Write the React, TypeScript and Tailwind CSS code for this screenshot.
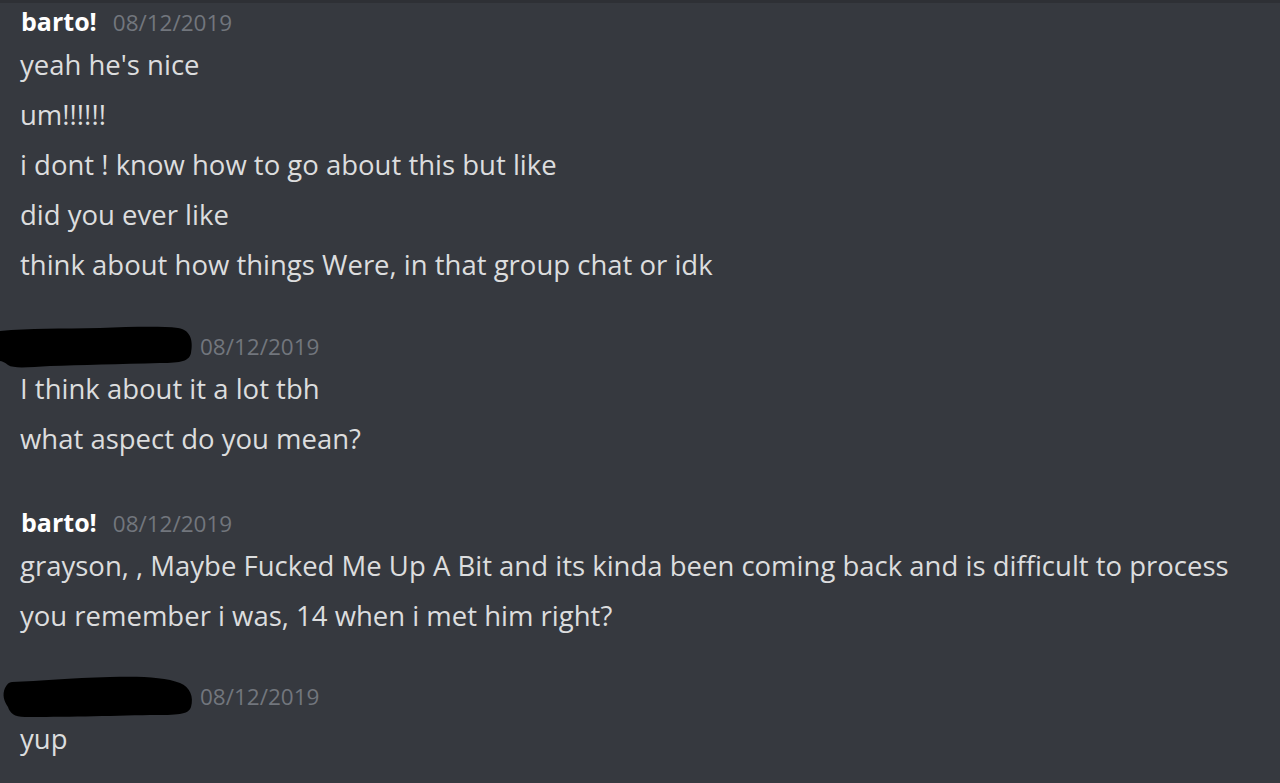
const Redacted = () => (
  <svg width="196" height="44" viewBox="0 0 196 44" className="block">
    <path
      d="M0 6 C30 3 60 4 100 3 C130 2 160 1 178 3 C192 5 193 18 191 28 C189 36 182 38 160 38 C120 39 80 40 50 41 C30 42 14 44 8 40 C4 37 2 36 0 36 Z"
      fill="#000"
    />
  </svg>
);

const Redacted2 = () => (
  <svg width="196" height="44" viewBox="0 0 196 44" className="block">
    <path
      d="M12 7 C40 6 70 3 110 2 C140 1 165 2 180 8 C190 12 194 22 191 32 C188 40 178 40 150 40 C110 41 60 42 25 42 C14 42 10 38 8 32 C4 26 2 20 5 13 C7 9 9 7 12 7 Z"
      fill="#000"
    />
  </svg>
);

type Msg = {
  name?: string;
  redact?: 1 | 2;
  gap: string;
  lines: string[];
};

const groups: Msg[] = [
  {
    name: "barto!",
    gap: "",
    lines: [
      "yeah he's nice",
      "um!!!!!!",
      "i dont ! know how to go about this but like",
      "did you ever like",
      "think about how things Were, in that group chat or idk",
    ],
  },
  { redact: 1, gap: "mt-[40px]", lines: ["I think about it a lot tbh", "what aspect do you mean?"] },
  {
    name: "barto!",
    gap: "mt-[40px]",
    lines: [
      "grayson, , Maybe Fucked Me Up A Bit and its kinda been coming back and is difficult to process",
      "you remember i was, 14 when i met him right?",
    ],
  },
  { redact: 2, gap: "mt-[39px]", lines: ["yup"] },
];

const Group = ({ msg }: { msg: Msg }) => (
  <div className={msg.gap}>
    {msg.name ? (
      <div className="flex items-center h-[37px] pl-[21px]">
        <div className="flex items-baseline gap-[16px] leading-none">
          <span className="text-[25px] font-bold text-white">{msg.name}</span>
          <span className="text-[22.5px] text-[#72767d]">08/12/2019</span>
        </div>
      </div>
    ) : (
      <div className="flex items-center h-[34px] gap-[4px]">
        {msg.redact === 1 ? <Redacted /> : <Redacted2 />}
        <span className="text-[22.5px] text-[#72767d] leading-none">08/12/2019</span>
      </div>
    )}
    <div className="pl-[20px]">
      {msg.lines.map((l, i) => (
        <div key={i} className="h-[50px] leading-[50px] text-[27.5px] text-[#dcddde] whitespace-nowrap">
          {l}
        </div>
      ))}
    </div>
  </div>
);

export default function App() {
  return (
    <div
      className="h-[783px] overflow-hidden bg-[#36393f] border-t-[3px] border-[#2e3035]"
      style={{ fontFamily: '"Open Sans", "Noto Sans", sans-serif' }}
    >
      {groups.map((g, i) => (
        <Group key={i} msg={g} />
      ))}
    </div>
  );
}
